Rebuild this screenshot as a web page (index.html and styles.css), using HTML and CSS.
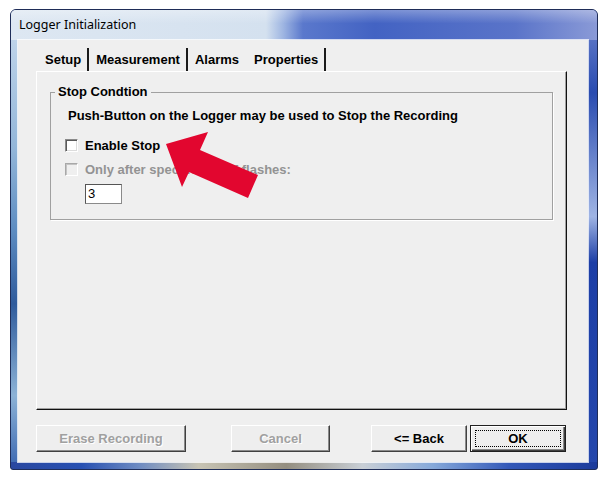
FILE: index.html
```html
<!DOCTYPE html>
<html lang="en">
  <head>
    <meta charset="UTF-8" />
    <meta name="viewport" content="width=device-width, initial-scale=1.0" />
    <link rel="stylesheet" href="styles.css">
    <title>Logger Initialization</title>
  </head>
  <body>
    <div class="window">
      <div class="titlebar">
        <span class="title">Logger Initialization</span>
      </div>
      <div class="client">
        <div class="tabs">
          <div class="tab">Setup</div>
          <div class="tab">Measurement</div>
          <div class="tab tab-open">Alarms</div>
          <div class="tab">Properties</div>
        </div>
        <div class="page">
          <fieldset class="group">
            <legend>Stop Condtion</legend>
            <p class="note">Push-Button on the Logger may be used to Stop the Recording</p>
            <div class="check"><span class="box"></span>Enable Stop</div>
            <div class="check disabled"><span class="box"></span>Only after specified nr of flashes:</div>
            <div class="field">3</div>
          </fieldset>
        </div>
        <div class="buttons">
          <div class="btn btn-erase disabled">Erase Recording</div>
          <div class="btn btn-cancel disabled">Cancel</div>
          <div class="btn btn-back">&lt;= Back</div>
          <div class="btn btn-ok default">OK</div>
        </div>
      </div>
    </div>

    <!-- red pointer arrow drawn over the dialog -->
    <svg class="pointer" width="604" height="479" viewBox="0 0 604 479">
      <polygon points="166,144 208,132 200,150 258,175 248,198 189,172 182,187" fill="#e2062f" />
    </svg>
  </body>
</html>
```

FILE: styles.css
```css
body {
  margin: 0;
  background: #fff;
  font-family: "Liberation Sans", Arial, sans-serif;
  font-size: 13px;
  font-weight: bold;
  color: #000;
  position: relative;
}
.window {
  margin: 9px 0 0 10px;
  width: 588px;
  height: 461px;
  box-sizing: border-box;
  border: 1px solid #1f2d58;
  border-radius: 6px 6px 3px 3px;
  overflow: hidden;
  padding: 0 9px 7px 7px;
  background-color: #3a5cb8;
  background-image:
    linear-gradient(to right, #2a48a0 0, #2750b2 12%, #6f8cc2 22%, #c8c4b4 32%, #948e80 47%, #c9cfd6 60%, #86a9da 72%, #3358b8 85%, #1c3b9c 100%),
    linear-gradient(to bottom, #c9dbee 0, #93b6d9 30%, #5d8cc1 48%, #2f5b9c 64%, #8cb2d6 84%, #3a66b0 100%),
    linear-gradient(to bottom, #6f86cf 0, #2a4cb0 18%, #9fb4e4 45%, #1c3ea6 55%, #2447ac 100%);
  background-size: 100% 7px, 7px 100%, 9px 100%;
  background-position: left bottom, left top, right top;
  background-repeat: no-repeat;
}
.titlebar {
  height: 30px;
  margin: 0 -9px 0 -7px;
  padding-left: 8px;
  background:
    linear-gradient(to bottom, rgba(255, 255, 255, 0.3), rgba(255, 255, 255, 0) 45%),
    linear-gradient(to right, #dde7f2 0, #d4e1ef 255px, #9fb6e2 272px, #5a78cc 292px, #4363c3 62%, #5a74c9 86%, #8a9ad7 100%);
}
.title {
  font-family: "Noto Sans", "Open Sans", sans-serif;
  font-weight: normal;
  font-size: 12.5px;
  line-height: 29px;
}
.client {
  height: 422px;
  box-sizing: border-box;
  background: #efefef;
  box-shadow: 0 0 0 1px rgba(255, 255, 255, 0.75);
  padding: 6px 21px 0 18px;
}

/* tab strip */
.tabs {
  display: flex;
  height: 25px;
  padding-left: 2px;
}
.tab {
  margin-top: 2px;
  height: 23px;
  line-height: 23px;
  padding: 0 6px 0 7px;
  border-right: 2px solid #1a1a1a;
}
.tab-open {
  border-right-color: transparent;
}
.page {
  height: 339px;
  box-sizing: border-box;
  border: 1px solid;
  border-color: #fff #111 #111 #fff;
  box-shadow: inset -1px -1px 0 #a0a0a0;
  padding-top: 0;
}

/* group box */
.group {
  margin: 12px 13px 0 13px;
  padding: 0 0 15px 0;
  border: 1px solid #a0a0a0;
  box-shadow: 1px 1px 0 #fff;
  min-width: 0;
}
.group legend {
  margin-left: 4px;
  padding: 0 3px;
  line-height: 16px;
}
.note {
  margin: 8px 0 0 0;
  padding-left: 17px;
  line-height: 16px;
}
.check {
  display: flex;
  align-items: center;
  height: 16px;
  margin-top: 13px;
  padding-left: 14px;
}
.check + .check {
  margin-top: 8px;
}
.box {
  width: 13px;
  height: 13px;
  box-sizing: border-box;
  margin-right: 7px;
  background: #fff;
  border: 1px solid;
  border-color: #8a8a8a #fff #fff #8a8a8a;
  box-shadow: inset 1px 1px 0 #5a5a5a, inset -1px -1px 0 #dcdcdc;
}
.check.disabled {
  color: #939393;
}
.check.disabled .box {
  background: #efefef;
  border-color: #a8a8a8 #fff #fff #a8a8a8;
  box-shadow: inset 1px 1px 0 #c4c4c4;
}
.field {
  margin: 7px 0 0 34px;
  width: 37px;
  height: 20px;
  box-sizing: border-box;
  background: #fff;
  border: 1px solid #8a8a8a;
  border-top-color: #555;
  border-left-color: #555;
  font-weight: normal;
  line-height: 18px;
  padding-left: 2px;
}

/* bottom buttons */
.buttons {
  display: flex;
  margin-top: 15px;
}
.btn {
  height: 27px;
  box-sizing: border-box;
  text-align: center;
  line-height: 25px;
  background: #eee;
  border: 1px solid;
  border-color: #fff #404040 #404040 #fff;
  box-shadow: inset -1px -1px 0 #8a8a8a;
  position: relative;
}
.btn.disabled {
  color: #a0a0a0;
  text-shadow: 1px 1px 0 #fff;
}
.btn-erase {
  width: 150px;
}
.btn-cancel {
  width: 99px;
  margin-left: 45px;
}
.btn-back {
  width: 96px;
  margin-left: 41px;
}
.btn-ok {
  width: 96px;
  margin-left: 3px;
}
.btn.default {
  border-color: #202020;
  box-shadow: inset 1px 1px 0 #fff, inset -1px -1px 0 #404040, inset -2px -2px 0 #8a8a8a;
}
.btn.default::after {
  content: "";
  position: absolute;
  left: 4px;
  top: 4px;
  right: 4px;
  bottom: 4px;
  border: 1px dotted #000;
}

.pointer {
  position: absolute;
  left: 0;
  top: 0;
  pointer-events: none;
}
```
